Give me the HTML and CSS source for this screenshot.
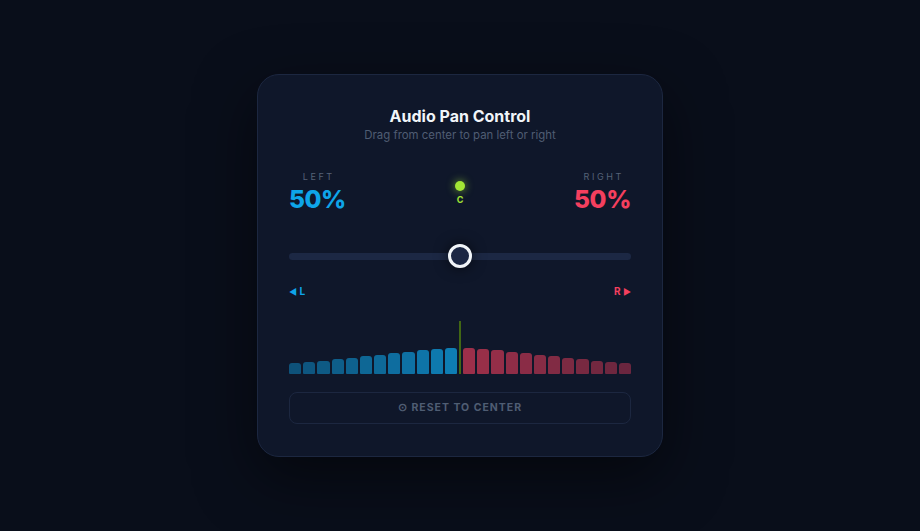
FILE: index.html
```html
<!DOCTYPE html>
<html>
<head>
<meta charset="utf-8">
<link rel="stylesheet" href="styles.css">
</head>
<body>
<div class="stage">
  <div class="card">
    <h1 class="title">Audio Pan Control</h1>
    <p class="subtitle">Drag from center to pan left or right</p>

    <div class="readouts">
      <div class="readout readout-left">
        <div class="readout-label">LEFT</div>
        <div class="readout-value">50%</div>
      </div>
      <div class="center-ind">
        <div class="center-dot"></div>
        <div class="center-label">C</div>
      </div>
      <div class="readout readout-right">
        <div class="readout-label">RIGHT</div>
        <div class="readout-value">50%</div>
      </div>
    </div>

    <div class="slider">
      <div class="track"></div>
      <div class="thumb"></div>
    </div>

    <div class="lr">
      <span class="lr-l"><span class="tri">◀</span> L</span>
      <span class="lr-r">R <span class="tri">▶</span></span>
    </div>

    <div class="meter">
      <div class="bar bar-l" style="height:20%;opacity:0.42"></div>
      <div class="bar bar-l" style="height:22.7%;opacity:0.45"></div>
      <div class="bar bar-l" style="height:25.5%;opacity:0.47"></div>
      <div class="bar bar-l" style="height:28.2%;opacity:0.5"></div>
      <div class="bar bar-l" style="height:30.9%;opacity:0.53"></div>
      <div class="bar bar-l" style="height:33.6%;opacity:0.56"></div>
      <div class="bar bar-l" style="height:36.4%;opacity:0.58"></div>
      <div class="bar bar-l" style="height:39.1%;opacity:0.61"></div>
      <div class="bar bar-l" style="height:41.8%;opacity:0.64"></div>
      <div class="bar bar-l" style="height:44.5%;opacity:0.66"></div>
      <div class="bar bar-l" style="height:47.3%;opacity:0.69"></div>
      <div class="bar bar-l" style="height:50%;opacity:0.72"></div>
      <div class="center-line"></div>
      <div class="bar bar-r" style="height:50%;opacity:0.62"></div>
      <div class="bar bar-r" style="height:47.3%;opacity:0.6"></div>
      <div class="bar bar-r" style="height:44.5%;opacity:0.58"></div>
      <div class="bar bar-r" style="height:41.8%;opacity:0.56"></div>
      <div class="bar bar-r" style="height:39.1%;opacity:0.54"></div>
      <div class="bar bar-r" style="height:36.4%;opacity:0.52"></div>
      <div class="bar bar-r" style="height:33.6%;opacity:0.5"></div>
      <div class="bar bar-r" style="height:30.9%;opacity:0.48"></div>
      <div class="bar bar-r" style="height:28.2%;opacity:0.46"></div>
      <div class="bar bar-r" style="height:25.5%;opacity:0.44"></div>
      <div class="bar bar-r" style="height:22.7%;opacity:0.42"></div>
      <div class="bar bar-r" style="height:20%;opacity:0.4"></div>
    </div>

    <button class="reset">⊙ RESET TO CENTER</button>
  </div>
</div>
</body>
</html>
```
FILE: styles.css
```css
* { box-sizing: border-box; }
html, body {
  margin: 0;
  padding: 0;
  width: 920px;
  height: 531px;
  background: #090e1a;
  font-family: Inter, "Noto Sans", sans-serif;
  overflow: hidden;
}
.stage {
  width: 920px;
  height: 531px;
  display: flex;
  justify-content: center;
  padding-top: 74px;
}
.card {
  width: 406px;
  height: 383px;
  background: #0f172a;
  border: 1px solid #1c2740;
  border-radius: 22px;
  padding: 30px 31px 0;
  box-shadow: 0 20px 60px rgba(0, 0, 0, 0.5);
}
.title {
  margin: 0;
  text-align: center;
  font-size: 16px;
  line-height: 22px;
  font-weight: 700;
  color: #f1f5f9;
}
.subtitle {
  margin: 0;
  text-align: center;
  font-size: 11.4px;
  line-height: 16px;
  color: #4f5d73;
}
.readouts {
  margin-top: 28px;
  display: grid;
  grid-template-columns: 1fr auto 1fr;
  align-items: start;
}
.readout { text-align: center; }
.readout-left { justify-self: start; }
.readout-right { justify-self: end; }
.readout-label {
  font-size: 9px;
  line-height: 12px;
  letter-spacing: 2.6px;
  margin-right: -2.6px;
  color: #566277;
}
.readout-value {
  margin-top: 2px;
  font-size: 24.5px;
  line-height: 29px;
  font-weight: 800;
  letter-spacing: -0.4px;
}
.readout-left .readout-value { color: #0ea5e9; }
.readout-right .readout-value { color: #f43f5e; }
.center-ind {
  padding-top: 10px;
  display: flex;
  flex-direction: column;
  align-items: center;
}
.center-dot {
  width: 10px;
  height: 10px;
  border-radius: 50%;
  background: #a3e635;
  box-shadow: 0 0 8px rgba(163, 230, 53, 0.7);
}
.center-label {
  margin-top: 3px;
  font-size: 9px;
  line-height: 11px;
  font-weight: 700;
  color: #a3e635;
}
.slider {
  margin-top: 30px;
  height: 24px;
  position: relative;
  display: flex;
  align-items: center;
}
.track {
  width: 100%;
  height: 7px;
  border-radius: 4px;
  background: #1c2844;
}
.thumb {
  position: absolute;
  left: 159px;
  top: 0;
  width: 24px;
  height: 24px;
  border-radius: 50%;
  background: #1b2744;
  border: 3px solid #f1f5f9;
  box-shadow: 0 0 14px rgba(0, 0, 0, 0.6);
}
.lr {
  margin-top: 17px;
  display: flex;
  justify-content: space-between;
  font-size: 10px;
  line-height: 12px;
  font-weight: 700;
}
.tri { font-size: 8.5px; }
.lr-l { color: #0ea5e9; }
.lr-r { color: #f43f5e; }
.meter {
  margin-top: 23px;
  height: 53px;
  display: flex;
  align-items: flex-end;
  gap: 2px;
}
.bar {
  flex: 1 1 0;
  border-radius: 3px 3px 1px 1px;
}
.bar-l { background: #0ea5e9; }
.bar-r { background: #f43f5e; }
.center-line {
  width: 2px;
  height: 100%;
  background: #4d7c0f;
  opacity: 0.8;
}
.reset {
  margin-top: 18px;
  width: 100%;
  height: 32px;
  background: transparent;
  border: 1px solid #1c2740;
  border-radius: 8px;
  color: #4f5d73;
  font-family: Inter, "Noto Sans", sans-serif;
  font-size: 10.5px;
  font-weight: 700;
  letter-spacing: 1px;
  padding: 0 0 1px;
}
```
